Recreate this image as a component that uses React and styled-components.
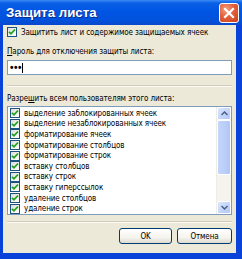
import React from "react";
import styled, { createGlobalStyle } from "styled-components";

const Global = createGlobalStyle`
  html, body { margin: 0; padding: 0; background: #ECE9D8; }
  * { box-sizing: border-box; }
`;

const Window = styled.div`
  width: 242px;
  height: 259px;
  display: flex;
  flex-direction: column;
  background: #0842d8;
  font-family: "DejaVu Sans Condensed", "Liberation Sans", Arial, sans-serif;
  font-size: 8px;
  letter-spacing: -0.1px;
  color: #000;
  overflow: hidden;
`;

const TitleBar = styled.div`
  height: 25px;
  flex: none;
  display: flex;
  align-items: center;
  justify-content: space-between;
  padding: 0 3px 0 6px;
  background: linear-gradient(180deg, #3d8cf6 0%, #0a5fe6 12%, #0055e3 45%, #0152dc 80%, #0a48cc 100%);
`;

const Title = styled.div`
  color: #fff;
  font-family: "Liberation Sans", Arial, sans-serif;
  font-weight: bold;
  font-size: 13.3px;
  letter-spacing: 0;
  text-shadow: 1px 1px 0 #0a2a8a;
`;

const CloseBtn = styled.div`
  width: 20px;
  height: 20px;
  border: 1px solid #fff;
  border-radius: 3px;
  background: radial-gradient(circle at 35% 30%, #f2a285 0%, #e35f3a 45%, #c9401c 100%);
  display: flex;
  align-items: center;
  justify-content: center;
`;

const Body = styled.div`
  flex: 1;
  margin: 0 6px 6px 3px;
  background: #ECE9D8;
  padding: 1px 4px 0 4px;
  display: flex;
  flex-direction: column;
`;

const CheckRow = styled.label`
  display: flex;
  align-items: center;
  gap: 4px;
  height: ${(p) => p.$h || 11}px;
  flex: none;
  white-space: nowrap;
  padding-left: ${(p) => p.$pl || 0}px;
`;

const Box = styled.span`
  width: 10px;
  height: 10px;
  flex: none;
  border: 1px solid #1c5180;
  background: linear-gradient(135deg, #dcdcd6 0%, #f4f4f0 60%, #fff 100%);
  display: flex;
  align-items: center;
  justify-content: center;
`;

const Label = styled.div`
  margin-top: ${(p) => p.$mt || 0}px;
  height: 11px;
  line-height: 11px;
  white-space: nowrap;
`;

const U = styled.span`
  text-decoration: underline;
`;

const Input = styled.div`
  margin-top: 3px;
  height: 15px;
  border: 1px solid #7f9db9;
  background: #fff;
  display: flex;
  align-items: center;
  padding-left: 2px;
  font-family: "Liberation Sans", Arial, sans-serif;
  font-size: 10px;
  font-weight: bold;
  letter-spacing: 0.5px;
`;

const Caret = styled.span`
  width: 1px;
  height: 10px;
  background: #000;
  margin-left: 0px;
`;

const Separator = styled.div`
  margin-top: ${(p) => p.$mt || 0}px;
  height: 2px;
  flex: none;
  border-top: 1px solid #d0ccbc;
  border-bottom: 1px solid #fbfaf6;
`;

const List = styled.div`
  margin-top: 2px;
  height: 109px;
  flex: none;
  border: 1px solid #7f9db9;
  background: #fff;
  display: flex;
`;

const Items = styled.div`
  flex: 1;
  padding: 1px 0 0 1px;
  display: flex;
  flex-direction: column;
`;

const ScrollBar = styled.div`
  width: 15px;
  flex: none;
  display: flex;
  flex-direction: column;
  background: #f4f3ee;
  border-left: 1px solid #eeede5;
`;

const ArrowBtn = styled.div`
  height: 13px;
  flex: none;
  background: linear-gradient(135deg, #dce7fd 0%, #c1d3fb 60%, #b4c8f6 100%);
  border: 1px solid #fff;
  border-radius: 2px;
  display: flex;
  align-items: center;
  justify-content: center;
`;

const Thumb = styled.div`
  height: 55px;
  flex: none;
  background: linear-gradient(90deg, #c6d6fb 0%, #bacdf8 60%, #b0c5f5 100%);
  border: 1px solid #fff;
  border-radius: 2px;
`;

const Track = styled.div`
  flex: 1;
`;

const Footer = styled.div`
  margin-top: 5px;
  display: flex;
  justify-content: flex-end;
  gap: 5px;
`;

const Button = styled.div`
  width: ${(p) => p.$w}px;
  height: 16px;
  border: 1px solid #003c74;
  border-radius: 3px;
  background: linear-gradient(180deg, #ffffff 0%, #f5f4ee 60%, #dedbd0 100%);
  display: flex;
  align-items: center;
  justify-content: center;
`;

const Check = () => (
  <svg width="8" height="8" viewBox="0 0 8 8">
    <path d="M1 3.8 L3 5.8 L7 1.5" fill="none" stroke="#21a121" strokeWidth="1.8" />
  </svg>
);

const items = [
  "выделение заблокированных ячеек",
  "выделение незаблокированных ячеек",
  "форматирование ячеек",
  "форматирование столбцов",
  "форматирование строк",
  "вставку столбцов",
  "вставку строк",
  "вставку гиперссылок",
  "удаление столбцов",
  "удаление строк",
];

export default function App() {
  return (
    <>
      <Global />
      <Window>
        <TitleBar>
          <Title>Защита листа</Title>
          <CloseBtn>
            <svg width="12" height="12" viewBox="0 0 12 12">
              <path d="M2 2 L10 10 M10 2 L2 10" stroke="#fff" strokeWidth="2.2" strokeLinecap="square" />
            </svg>
          </CloseBtn>
        </TitleBar>
        <Body>
          <CheckRow $h={12}>
            <Box><Check /></Box>
            <span>Защитить лист и содержимое защищаемых ячеек</span>
          </CheckRow>
          <Label $mt={8}><U>П</U>ароль для отключения защиты листа:</Label>
          <Input>
            •••<Caret />
          </Input>
          <Separator $mt={10} />
          <Label $mt={6}>Разре<U>ш</U>ить всем пользователям этого листа:</Label>
          <List>
            <Items>
              {items.map((t) => (
                <CheckRow key={t} $h={10.6} $pl={1}>
                  <Box><Check /></Box>
                  <span>{t}</span>
                </CheckRow>
              ))}
            </Items>
            <ScrollBar>
              <ArrowBtn>
                <svg width="7" height="5" viewBox="0 0 7 5">
                  <path d="M0.5 4 L3.5 1 L6.5 4" fill="none" stroke="#4d6185" strokeWidth="1.5" />
                </svg>
              </ArrowBtn>
              <Thumb />
              <Track />
              <ArrowBtn>
                <svg width="7" height="5" viewBox="0 0 7 5">
                  <path d="M0.5 1 L3.5 4 L6.5 1" fill="none" stroke="#4d6185" strokeWidth="1.5" />
                </svg>
              </ArrowBtn>
            </ScrollBar>
          </List>
          <Separator $mt={6} />
          <Footer>
            <Button $w={53}>OK</Button>
            <Button $w={55}>Отмена</Button>
          </Footer>
        </Body>
      </Window>
    </>
  );
}
